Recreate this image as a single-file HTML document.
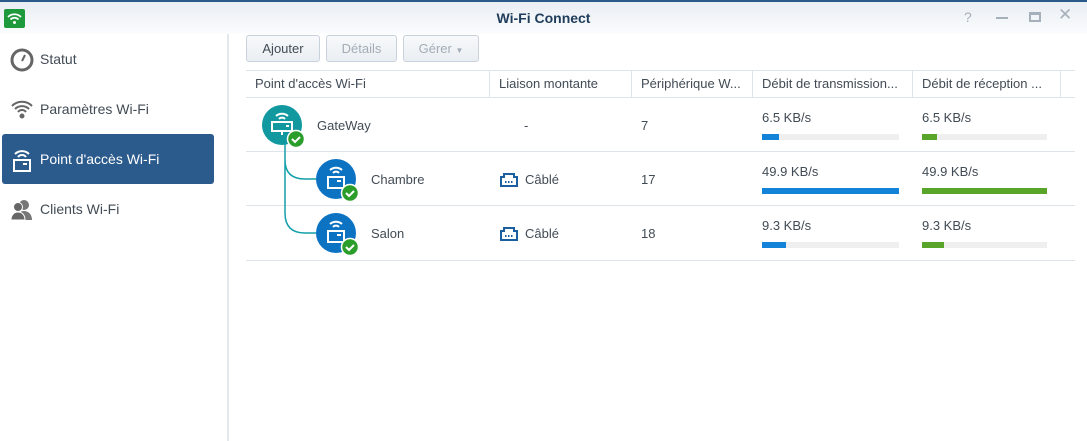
<!DOCTYPE html>
<html><head><meta charset="utf-8"><style>
*{margin:0;padding:0;box-sizing:border-box}
body{width:1087px;height:441px;overflow:hidden;background:#fff;font-family:"Liberation Sans","DejaVu Sans",sans-serif;font-size:13px;color:#414b55;position:relative}
.abs{position:absolute}
#title{left:0;top:0;width:1087px;height:34px;background:linear-gradient(#e9eef4,#fbfcfd);border-top:2px solid #2a5a8a}
#title .t{left:0;width:1087px;top:8px;text-align:center;font-weight:bold;font-size:14px;color:#1f3c5a}
#side{left:0;top:34px;width:229px;height:407px;background:#fff;border-right:2px solid #e4e8ec}
.item{position:absolute;left:2px;width:212px;height:50px;line-height:50px;padding-left:38px;font-size:14px;color:#414b55}
.item.act{background:#2b5a8c;color:#fff;border-radius:3px}
.item svg{position:absolute;left:8px;top:14px}
.btn{position:absolute;top:35px;height:27px;border:1px solid #c9d2dc;border-radius:3px;background:linear-gradient(#f7f9fb,#eaeef2);text-align:center;line-height:25px;font-size:13px}
.hdr{left:246px;top:70px;width:829px;height:28px;border-top:1px solid #dfe4ea;border-bottom:1px solid #dfe4ea}
.hc{position:absolute;top:0;height:26px;line-height:26px;padding-left:9px;border-right:1px solid #dfe4ea;white-space:nowrap}
.line{position:absolute;left:246px;width:829px;height:1px;background:#dfe4ea}
.bar{position:absolute;height:6px;background:#efefef}
.bar i{display:block;height:6px}
</style></head><body>
<div id="title" class="abs">
 <div class="abs" style="left:4px;top:7px;width:21px;height:19px;background:#1e9a3c;border-radius:2px"></div>
 <svg class="abs" style="left:6px;top:9px" width="17" height="14" viewBox="0 0 17 14"><path d="M2 6a9 9 0 0 1 13 0M4.5 8.5a5.5 5.5 0 0 1 8 0" stroke="#fff" stroke-width="1.8" fill="none"/><circle cx="8.5" cy="11.5" r="1.5" fill="#fff"/></svg>
 <div class="abs t">Wi-Fi Connect</div>
 <div class="abs" style="left:964px;top:7px;color:#a6b0ba;font-size:14px">?</div>
 <div class="abs" style="left:996px;top:15px;width:12px;height:2px;background:#a6b0ba"></div>
 <div class="abs" style="left:1029px;top:10px;width:12px;height:10px;border:2px solid #a6b0ba;border-top-width:3px"></div>
 <div class="abs" style="left:1058px;top:3px;color:#a6b0ba;font-size:17px">✕</div>
</div>
<div id="side" class="abs">
 <div class="item" style="top:0">
  <svg width="24" height="24" viewBox="0 0 24 24"><circle cx="12" cy="12" r="10" fill="none" stroke="#666" stroke-width="3"/><path d="M12 13l3-6" stroke="#666" stroke-width="2"/></svg>Statut</div>
 <div class="item" style="top:50px">
  <svg width="24" height="22" viewBox="0 0 24 22"><path d="M2 8a14 14 0 0 1 20 0M5 11a10 10 0 0 1 14 0M8 14a5 5 0 0 1 8 0" stroke="#666" stroke-width="2" fill="none"/><circle cx="12" cy="18" r="2.5" fill="#666"/></svg>Paramètres Wi-Fi</div>
 <div class="item act" style="top:100px">
  <svg width="24" height="26" viewBox="0 0 24 26"><path d="M5 6a10 10 0 0 1 14 0M8 9a5 5 0 0 1 8 0" stroke="#fff" stroke-width="2" fill="none"/><rect x="4" y="12" width="16" height="11" fill="none" stroke="#fff" stroke-width="2"/><rect x="13" y="15" width="4" height="2" fill="#fff"/></svg>Point d'accès Wi-Fi</div>
 <div class="item" style="top:150px">
  <svg width="24" height="24" viewBox="0 0 24 24"><circle cx="14" cy="7" r="5" fill="#777"/><path d="M6 22c0-6 4-9 8-9s8 3 8 9z" fill="#777"/><circle cx="8" cy="9" r="4.5" fill="#666" stroke="#fff"/><path d="M1 22c0-5 3-8 7-8s7 3 7 8z" fill="#666" stroke="#fff"/></svg>Clients Wi-Fi</div>
</div>
<div class="btn" style="left:246px;width:74px">Ajouter</div>
<div class="btn" style="left:326px;width:71px;color:#a4adb7">Détails</div>
<div class="btn" style="left:403px;width:76px;color:#a4adb7">Gérer <span style="font-size:8px">▼</span></div>
<div class="abs hdr">
 <div class="hc" style="left:0;width:244px">Point d'accès Wi-Fi</div>
 <div class="hc" style="left:244px;width:142px">Liaison montante</div>
 <div class="hc" style="left:386px;width:121px">Périphérique W...</div>
 <div class="hc" style="left:507px;width:160px">Débit de transmission...</div>
 <div class="hc" style="left:667px;width:148px">Débit de réception ...</div>
</div>
<div class="line" style="top:151px"></div>
<div class="line" style="top:205px"></div>
<div class="line" style="top:260px"></div>
<svg class="abs" style="left:250px;top:100px" width="120" height="160">
 <path d="M35 40V113q0 20 20 20h14M35 60q0 19 20 19h14" stroke="#139fa9" stroke-width="1.5" fill="none"/>
 <circle cx="32" cy="25" r="20" fill="#12999f"/>
 <circle cx="86" cy="79" r="20" fill="#0c73c2"/>
 <circle cx="86" cy="133" r="20" fill="#0c73c2"/>
 <g stroke="#fff" stroke-width="2" fill="none">
  <path d="M26 16a9 9 0 0 1 12 0M29 19a4 4 0 0 1 6 0"/><rect x="22" y="22" width="20" height="9"/><path d="M32 31v4"/>
  <path d="M80 70a9 9 0 0 1 12 0M83 73a4 4 0 0 1 6 0"/><rect x="78" y="77" width="16" height="11"/>
  <path d="M80 124a9 9 0 0 1 12 0M83 127a4 4 0 0 1 6 0"/><rect x="78" y="131" width="16" height="11"/>
 </g>
 <g fill="#fff"><rect x="36" y="25" width="3" height="2"/><rect x="87" y="80" width="4" height="2"/><rect x="87" y="134" width="4" height="2"/></g>
 <g><circle cx="46" cy="39" r="8.5" fill="#2b9d2b" stroke="#fff" stroke-width="1.5"/><path d="M42 39l3 3 5-5" stroke="#fff" stroke-width="2" fill="none"/>
 <circle cx="100" cy="93" r="8.5" fill="#2b9d2b" stroke="#fff" stroke-width="1.5"/><path d="M96 93l3 3 5-5" stroke="#fff" stroke-width="2" fill="none"/>
 <circle cx="100" cy="147" r="8.5" fill="#2b9d2b" stroke="#fff" stroke-width="1.5"/><path d="M96 147l3 3 5-5" stroke="#fff" stroke-width="2" fill="none"/></g>
</svg>
<div class="abs" style="left:317px;top:118px">GateWay</div>
<div class="abs" style="left:371px;top:172px">Chambre</div>
<div class="abs" style="left:371px;top:226px">Salon</div>
<div class="abs" style="left:524px;top:118px">-</div>
<svg class="abs" style="left:500px;top:172px" width="18" height="15" viewBox="0 0 18 15"><path d="M1 14V5h3V2h10v3h3v9z" fill="none" stroke="#1a5fa0" stroke-width="2"/><g fill="#1a5fa0"><rect x="5" y="9" width="1.5" height="2"/><rect x="8" y="9" width="1.5" height="2"/><rect x="11" y="9" width="1.5" height="2"/></g></svg>
<div class="abs" style="left:525px;top:172px">Câblé</div>
<svg class="abs" style="left:500px;top:226px" width="18" height="15" viewBox="0 0 18 15"><path d="M1 14V5h3V2h10v3h3v9z" fill="none" stroke="#1a5fa0" stroke-width="2"/><g fill="#1a5fa0"><rect x="5" y="9" width="1.5" height="2"/><rect x="8" y="9" width="1.5" height="2"/><rect x="11" y="9" width="1.5" height="2"/></g></svg>
<div class="abs" style="left:525px;top:226px">Câblé</div>
<div class="abs" style="left:641px;top:118px">7</div>
<div class="abs" style="left:641px;top:172px">17</div>
<div class="abs" style="left:641px;top:226px">18</div>
<div class="abs" style="left:762px;top:110px">6.5 KB/s</div>
<div class="abs" style="left:922px;top:110px">6.5 KB/s</div>
<div class="abs" style="left:762px;top:164px">49.9 KB/s</div>
<div class="abs" style="left:922px;top:164px">49.9 KB/s</div>
<div class="abs" style="left:762px;top:218px">9.3 KB/s</div>
<div class="abs" style="left:922px;top:218px">9.3 KB/s</div>
<div class="bar" style="left:762px;top:134px;width:137px"><i style="width:17px;background:#1283d8"></i></div>
<div class="bar" style="left:922px;top:134px;width:125px"><i style="width:15px;background:#58a52a"></i></div>
<div class="bar" style="left:762px;top:188px;width:137px"><i style="width:137px;background:#1283d8"></i></div>
<div class="bar" style="left:922px;top:188px;width:125px"><i style="width:125px;background:#58a52a"></i></div>
<div class="bar" style="left:762px;top:242px;width:137px"><i style="width:24px;background:#1283d8"></i></div>
<div class="bar" style="left:922px;top:242px;width:125px"><i style="width:22px;background:#58a52a"></i></div>
</body></html>
